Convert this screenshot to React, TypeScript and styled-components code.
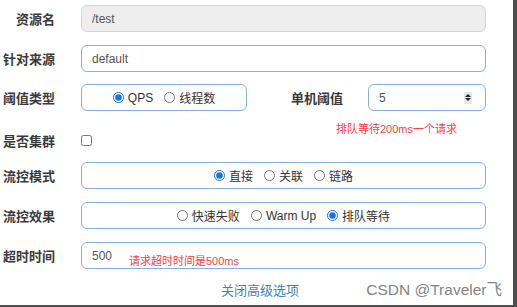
import React, { FC } from "react";
import styled, { createGlobalStyle } from "styled-components";

const GlobalStyle = createGlobalStyle`
  html, body {
    margin: 0;
    padding: 0;
    background: #4d4d4d;
    overflow: hidden;
  }
  body {
    font-family: "Liberation Sans", "Noto Sans CJK SC", sans-serif;
  }
`;

const FONT = `"Liberation Sans", "Noto Sans CJK SC", sans-serif`;

const Page = styled.div`
  position: relative;
  width: 513px;
  height: 305px;
  background: #fff;
  padding-top: 5px;
  box-sizing: border-box;
  font-family: ${FONT};
`;

const Row = styled.div<{ $mt: number; $h?: number }>`
  position: relative;
  display: grid;
  grid-template-columns: 55px 405px;
  column-gap: 26px;
  align-items: center;
  height: ${(p) => p.$h ?? 27}px;
  margin-top: ${(p) => p.$mt}px;
`;

const Label = styled.label`
  text-align: right;
  font-size: 13px;
  font-weight: bold;
  color: #3a3a3a;
  white-space: nowrap;
`;

const TextInput = styled.input<{ $disabled?: boolean }>`
  box-sizing: border-box;
  height: 27px;
  width: 100%;
  padding: 0 10px;
  border: 1px solid ${(p) => (p.$disabled ? "#d6d6d6" : "#86b0dd")};
  border-radius: 6px;
  background: ${(p) => (p.$disabled ? "#eee" : "#fff")};
  color: #555;
  font-family: ${FONT};
  font-size: 12px;
  outline: none;
`;

const RadioBox = styled.div`
  box-sizing: border-box;
  height: 27px;
  border: 1px solid #86b0dd;
  border-radius: 6px;
  display: flex;
  align-items: center;
  justify-content: center;
  gap: 11px;
`;

const Option = styled.label`
  display: flex;
  align-items: center;
  gap: 4px;
  font-size: 12px;
  color: #333;
  white-space: nowrap;

  input {
    width: 11px;
    height: 11px;
    margin: 0;
    accent-color: #1a73e8;
  }
`;

const SplitControl = styled.div`
  display: grid;
  grid-template-columns: 166px 1fr 118px;
  align-items: center;
`;

const SideLabel = styled(Label)`
  padding-right: 25px;
`;

const NumberBox = styled.div`
  box-sizing: border-box;
  height: 27px;
  display: flex;
  align-items: center;
  padding: 0 13px 0 10px;
  border: 1px solid #86b0dd;
  border-radius: 6px;
  font-size: 12px;
  color: #555;
`;

const NumberValue = styled.span`
  flex: 1;
`;

const Spinner = styled.span`
  width: 8px;
  height: 12px;
  background: #e6e6e6;
  display: flex;
  flex-direction: column;
  align-items: center;
  justify-content: center;
  gap: 1px;
`;

const Tri = styled.span<{ $down?: boolean }>`
  width: 0;
  height: 0;
  border-left: 3px solid transparent;
  border-right: 3px solid transparent;
  ${(p) =>
    p.$down ? "border-top: 3px solid #222;" : "border-bottom: 3px solid #222;"}
`;

const Check = styled.input`
  width: 11px;
  height: 11px;
  margin: 0;
`;

const Note = styled.span<{ $left: number; $top: number; $size: number }>`
  position: absolute;
  left: ${(p) => p.$left}px;
  top: ${(p) => p.$top}px;
  font-size: ${(p) => p.$size}px;
  line-height: 14px;
  color: #ff3b3b;
  white-space: nowrap;
`;

const LinkRow = styled.div`
  margin-top: 12px;
  padding-left: 7px;
  text-align: center;
  line-height: 18px;
`;

const Link = styled.a`
  font-size: 13px;
  color: #3a84c6;
  text-decoration: none;
`;

const Watermark = styled.span`
  position: absolute;
  right: 11px;
  bottom: 6px;
  line-height: 18px;
  font-size: 15.5px;
  color: #858585;
  white-space: nowrap;
`;

const RadioGroup: FC<{ name: string; options: string[]; checked: string }> = ({
  name,
  options,
  checked,
}) => (
  <RadioBox>
    {options.map((o) => (
      <Option key={o}>
        <input type="radio" name={name} defaultChecked={o === checked} />
        {o}
      </Option>
    ))}
  </RadioBox>
);

const App: FC = () => {
  return (
    <>
      <GlobalStyle />
      <Page>
        <Row $mt={0}>
          <Label>资源名</Label>
          <TextInput $disabled defaultValue="/test" disabled />
        </Row>
        <Row $mt={13}>
          <Label>针对来源</Label>
          <TextInput defaultValue="default" />
        </Row>
        <Row $mt={12}>
          <Label>阈值类型</Label>
          <SplitControl>
            <RadioGroup name="grade" options={["QPS", "线程数"]} checked="QPS" />
            <SideLabel>单机阈值</SideLabel>
            <NumberBox>
              <NumberValue>5</NumberValue>
              <Spinner>
                <Tri />
                <Tri $down />
              </Spinner>
            </NumberBox>
          </SplitControl>
          <Note $left={336} $top={38} $size={11}>
            排队等待200ms一个请求
          </Note>
        </Row>
        <Row $mt={17} $h={24}>
          <Label>是否集群</Label>
          <Check type="checkbox" />
        </Row>
        <Row $mt={10}>
          <Label>流控模式</Label>
          <RadioGroup
            name="strategy"
            options={["直接", "关联", "链路"]}
            checked="直接"
          />
        </Row>
        <Row $mt={13}>
          <Label>流控效果</Label>
          <RadioGroup
            name="behavior"
            options={["快速失败", "Warm Up", "排队等待"]}
            checked="排队等待"
          />
        </Row>
        <Row $mt={13}>
          <Label>超时时间</Label>
          <TextInput defaultValue="500" />
          <Note $left={129} $top={12} $size={11}>
            请求超时时间是500ms
          </Note>
        </Row>
        <LinkRow>
          <Link href="#">关闭高级选项</Link>
        </LinkRow>
        <Watermark>CSDN @Traveler飞</Watermark>
      </Page>
    </>
  );
};

export default App;
